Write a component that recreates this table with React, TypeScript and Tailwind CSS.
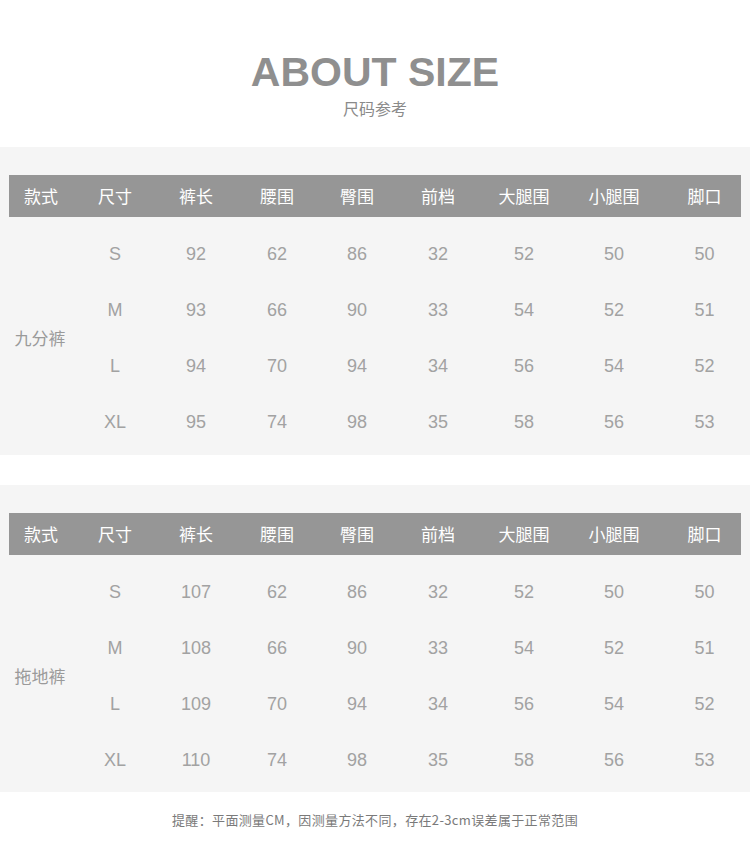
import React from 'react';

const headers = ['款式', '尺寸', '裤长', '腰围', '臀围', '前档', '大腿围', '小腿围', '脚口'];

const tables = [
  {
    name: '九分裤',
    rows: [
      ['S', '92', '62', '86', '32', '52', '50', '50'],
      ['M', '93', '66', '90', '33', '54', '52', '51'],
      ['L', '94', '70', '94', '34', '56', '54', '52'],
      ['XL', '95', '74', '98', '35', '58', '56', '53'],
    ],
  },
  {
    name: '拖地裤',
    rows: [
      ['S', '107', '62', '86', '32', '52', '50', '50'],
      ['M', '108', '66', '90', '33', '54', '52', '51'],
      ['L', '109', '70', '94', '34', '56', '54', '52'],
      ['XL', '110', '74', '98', '35', '58', '56', '53'],
    ],
  },
];

const grid = 'grid grid-cols-[64px_84px_78px_84px_76px_86px_86px_94px_78px]';

const SizeTable = ({ name, rows, className }: { name: string; rows: string[][]; className: string }) => (
  <div className={`bg-[#f5f5f5] px-[9px] pt-[28px] ${className}`}>
    {/* header bar */}
    <div className={`${grid} h-[42px] items-center bg-[#969696] text-[17px] text-white`}>
      {headers.map((h, i) => (
        <div key={h} className={`text-center ${i === 8 ? 'pl-[9px]' : ''}`}>
          {h}
        </div>
      ))}
    </div>

    {/* body */}
    <div className={`${grid} mt-[9px] grid-rows-[repeat(4,56px)] items-center text-[#a2a2a2]`}>
      <div className="row-span-4 pr-[2px] text-center text-[17px] text-[#9a9a9a]">{name}</div>
      {rows.map((r) =>
        r.map((v, i) => (
          <div
            key={r[0] + i}
            className={`text-center text-[18px] font-['Liberation_Sans','Noto_Sans_CJK_SC',sans-serif] ${i === 7 ? 'pl-[9px]' : ''}`}
          >
            {v}
          </div>
        ))
      )}
    </div>
  </div>
);

export default function App() {
  return (
    <div className="w-[750px] h-[855px] bg-white font-['Noto_Sans_CJK_SC',sans-serif] overflow-hidden">
      <div className="pt-[52px] text-center">
        <div className="text-[41px] leading-[41px] font-bold text-[#8f8f8f] font-['Liberation_Sans',sans-serif]">
          ABOUT SIZE
        </div>
        <div className="mt-[7px] text-[16px] leading-[16px] text-[#8a8a8a]">尺码参考</div>
      </div>

      <SizeTable name={tables[0].name} rows={tables[0].rows} className="mt-[31px] pb-[5px]" />
      <SizeTable name={tables[1].name} rows={tables[1].rows} className="mt-[30px] pb-[4px]" />

      <div className="flex h-[56px] items-center justify-center text-[13px] tracking-[0.35px] text-[#7a7a7a]">
        提醒：平面测量CM，因测量方法不同，存在2-3cm误差属于正常范围
      </div>
    </div>
  );
}
